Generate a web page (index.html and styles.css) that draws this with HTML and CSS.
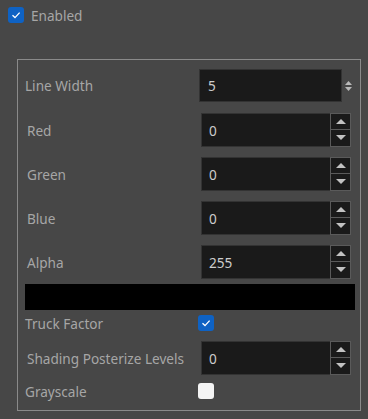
FILE: index.html
```html
<!DOCTYPE html>
<html lang="en">
<head>
    <meta charset="UTF-8">
    <meta name="viewport" content="width=device-width, initial-scale=1.0">
    <title>Filter Settings</title>
    <link rel="stylesheet" href="styles.css">
</head>
<body>
    <!-- Enable toggle -->
    <div class="enabled">
        <span class="check on">
            <svg viewBox="0 0 16 16" width="16" height="16"><path d="M4.5 8.3 L7 10.6 L11.6 5.6" fill="none" stroke="#fff" stroke-width="1.3"/></svg>
        </span>
        <span class="enabled-label">Enabled</span>
    </div>

    <!-- Settings group -->
    <section class="group">
        <div class="row row-width">
            <span class="label">Line Width</span>
            <div class="combo">
                <span class="value">5</span>
            </div>
            <svg class="combo-arrows" viewBox="0 0 7 10" width="7" height="10"><path d="M3.5 0 L7 4 L0 4 Z M0 6 L7 6 L3.5 10 Z" fill="#b9b9b9"/></svg>
        </div>

        <div class="row row-spin">
            <span class="label label-spin">Red</span>
            <div class="spin">
                <span class="value">0</span>
                <div class="spin-btns">
                    <span class="btn up"></span>
                    <span class="btn down"></span>
                </div>
            </div>
        </div>

        <div class="row row-spin">
            <span class="label label-spin">Green</span>
            <div class="spin">
                <span class="value">0</span>
                <div class="spin-btns">
                    <span class="btn up"></span>
                    <span class="btn down"></span>
                </div>
            </div>
        </div>

        <div class="row row-spin">
            <span class="label label-spin">Blue</span>
            <div class="spin">
                <span class="value">0</span>
                <div class="spin-btns">
                    <span class="btn up"></span>
                    <span class="btn down"></span>
                </div>
            </div>
        </div>

        <div class="row row-spin">
            <span class="label label-spin">Alpha</span>
            <div class="spin">
                <span class="value">255</span>
                <div class="spin-btns">
                    <span class="btn up"></span>
                    <span class="btn down"></span>
                </div>
            </div>
        </div>

        <div class="swatch"></div>

        <div class="row row-check">
            <span class="label">Truck Factor</span>
            <span class="check on">
                <svg viewBox="0 0 16 16" width="16" height="16"><path d="M4.5 8.3 L7 10.6 L11.6 5.6" fill="none" stroke="#fff" stroke-width="1.3"/></svg>
            </span>
        </div>

        <div class="row row-spin row-shading">
            <span class="label label-spin">Shading Posterize Levels</span>
            <div class="spin">
                <span class="value">0</span>
                <div class="spin-btns">
                    <span class="btn up"></span>
                    <span class="btn down"></span>
                </div>
            </div>
        </div>

        <div class="row row-check row-gray">
            <span class="label">Grayscale</span>
            <span class="check off"></span>
        </div>
    </section>
</body>
</html>
```

FILE: styles.css
```css
/* General styling */
body {
    margin: 0;
    background-color: #474747;
    color: #a6a6a6;
    font-family: "Segoe UI", "Noto Sans", sans-serif;
    font-size: 13.6px;
}

.enabled {
    display: flex;
    align-items: center;
    height: 16px;
    padding: 7px 0 0 8px;
}

.enabled-label {
    margin-left: 7px;
}

.check {
    display: block;
    width: 16px;
    height: 16px;
    border-radius: 3px;
    box-sizing: border-box;
}

.check svg {
    display: block;
}

.check.on {
    background-color: #0e62c4;
}

.check.off {
    background-color: #f4f4f4;
}

/* Group box */
.group {
    box-sizing: border-box;
    width: 344px;
    height: 352px;
    margin: 36px 0 0 17px;
    padding: 9px 0 0 6px;
    border: 1px solid #8a8a8a;
}

.row {
    display: flex;
    align-items: center;
}

.label {
    width: 173px;
    margin-left: 1px;
    white-space: nowrap;
}

.label-spin {
    width: 171px;
    margin-left: 3px;
}

.value {
    color: #cdcdcd;
}

/* Line width combo */
.row-width {
    height: 33px;
}

.combo {
    box-sizing: border-box;
    width: 143px;
    height: 33px;
    margin-left: 1px;
    padding-left: 8px;
    display: flex;
    align-items: center;
    background-color: #1a1a1a;
    border: 1px solid #333;
}

.combo-arrows {
    margin-left: 3px;
}

/* Spin boxes */
.row-spin {
    height: 34px;
    margin-top: 10px;
}

.row-spin:nth-child(2) {
    margin-top: 11px;
}

.spin {
    box-sizing: border-box;
    width: 150px;
    height: 34px;
    margin-left: 3px;
    display: flex;
    align-items: center;
    background-color: #1a1a1a;
    border: 1px solid #333;
}

.spin .value {
    flex: 1;
    padding-left: 7px;
}

.spin-btns {
    width: 21px;
    height: 34px;
    margin: -1px -1px -1px 0;
    display: flex;
    flex-direction: column;
}

.btn {
    position: relative;
    box-sizing: border-box;
    height: 17px;
    background-color: #1a1a1a;
    border: 1px solid #5a5a5a;
}

.btn.down {
    border-top: none;
}

.btn::after {
    content: "";
    position: absolute;
    left: 5px;
    border-left: 5px solid transparent;
    border-right: 5px solid transparent;
}

.btn.up::after {
    top: 5px;
    border-bottom: 5px solid #c2c2c2;
}

.btn.down::after {
    top: 5px;
    border-top: 5px solid #c2c2c2;
}

.swatch {
    width: 330px;
    height: 26px;
    margin: 5px 0 0 1px;
    background-color: #000;
}

.row-check {
    height: 16px;
    margin-top: 5px;
}

.row-shading {
    margin-top: 10px;
}

.row-gray {
    margin-top: 8px;
}
```
